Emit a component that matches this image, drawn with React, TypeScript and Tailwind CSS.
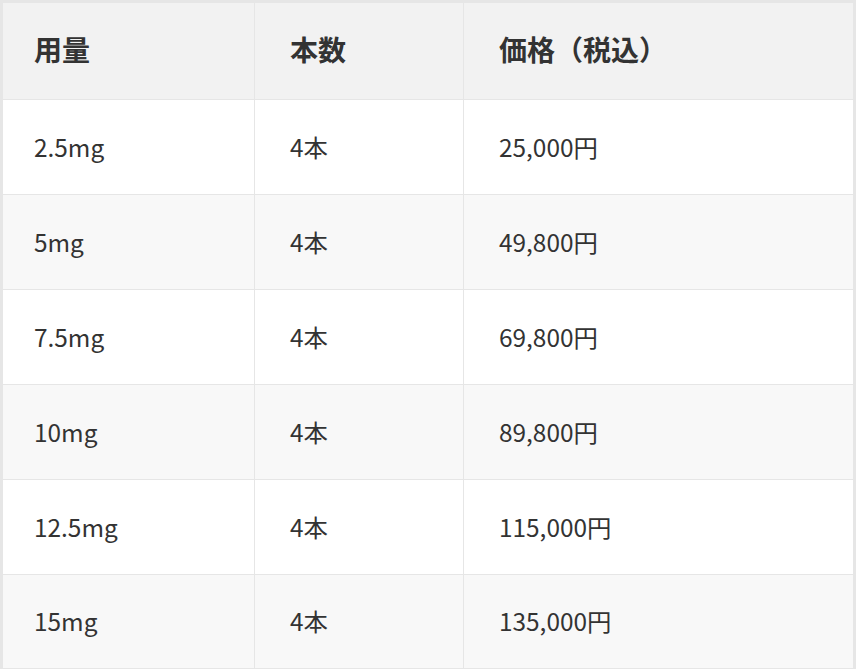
const rows = [
  { dose: '2.5mg', count: '4本', price: '25,000円' },
  { dose: '5mg', count: '4本', price: '49,800円' },
  { dose: '7.5mg', count: '4本', price: '69,800円' },
  { dose: '10mg', count: '4本', price: '89,800円' },
  { dose: '12.5mg', count: '4本', price: '115,000円' },
  { dose: '15mg', count: '4本', price: '135,000円' },
];

export default function App() {
  return (
    <div
      className="w-[856px] h-[669px] bg-white text-[#333333]"
      style={{ fontFamily: '"Noto Sans CJK JP", "Noto Sans", sans-serif' }}
    >
      <table className="w-full h-full border-collapse border-[3px] border-[#e6e6e6] text-[24.4px]">
        <thead>
          <tr className="bg-[#f2f2f2] h-[98px] text-[28px]">
            <th className="w-[253px] pl-[31px] pb-[4px] text-left font-bold border border-[#e6e6e6]">用量</th>
            <th className="w-[209px] pl-[35px] pb-[4px] text-left font-bold border border-[#e6e6e6]">本数</th>
            <th className="pl-[35px] pb-[4px] text-left font-bold border border-[#e6e6e6]">価格（税込）</th>
          </tr>
        </thead>
        <tbody>
          {rows.map((r, i) => (
            <tr key={r.dose} className={i % 2 === 1 ? 'bg-[#f8f8f8] h-[95px]' : 'bg-white h-[95px]'}>
              <td className="pl-[31px] border border-[#e6e6e6]">{r.dose}</td>
              <td className="pl-[35px] border border-[#e6e6e6]">{r.count}</td>
              <td className="pl-[35px] border border-[#e6e6e6]">{r.price}</td>
            </tr>
          ))}
        </tbody>
      </table>
    </div>
  );
}
